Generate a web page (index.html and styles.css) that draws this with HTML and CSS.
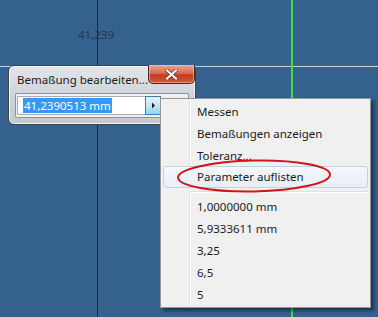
FILE: index.html
```html
<!DOCTYPE html>
<html lang="de">
<head>
  <meta charset="utf-8"/>
  <title>Bemaßung bearbeiten</title>
  <link rel="stylesheet" href="styles.css">
</head>
<body>

<div class="scene">
  <!-- Skizze : Achsen und Maß -->
  <div class="axis-v"></div>
  <div class="axis-h"></div>
  <div class="axis-green"></div>
  <span class="dim-label">41,239</span>

  <!-- Dialog -->
  <div class="dialog">
    <div class="dialog-title">
      <span>Bemaßung bearbeiten...</span>
      <button class="close-btn">
        <svg width="13" height="11" viewBox="0 0 13 11">
          <path d="M2 1.5 L11 9.5 M11 1.5 L2 9.5" stroke="#5a2a22" stroke-width="3.4" stroke-linecap="square"/>
          <path d="M2 1.5 L11 9.5 M11 1.5 L2 9.5" stroke="#ffffff" stroke-width="2.2" stroke-linecap="square"/>
        </svg>
      </button>
    </div>
    <div class="dialog-body">
      <div class="combo">
        <span class="combo-value"><span class="sel">41,2390513 mm</span></span>
        <span class="combo-btn">
          <svg width="5" height="7" viewBox="0 0 5 7"><path d="M1 0.5 L4 3.5 L1 6.5 Z" fill="#1a1a1a"/></svg>
        </span>
      </div>
    </div>
  </div>

  <!-- Kontextmenü -->
  <ul class="menu">
    <li>Messen</li>
    <li>Bemaßungen anzeigen</li>
    <li>Toleranz...</li>
    <li class="hover">Parameter auflisten</li>
    <li class="sep"></li>
    <li>1,0000000 mm</li>
    <li>5,9333611 mm</li>
    <li>3,25</li>
    <li>6,5</li>
    <li>5</li>
  </ul>

  <!-- rote Markierung -->
  <svg class="mark" width="162" height="40" viewBox="0 0 162 40">
    <ellipse cx="80" cy="19" rx="76" ry="15.5" fill="none" stroke="#d0141c" stroke-width="2" transform="rotate(-1.2 80 19)"/>
  </svg>
</div>

</body>
</html>
```

FILE: styles.css
```css
/* -------------------- Base -------------------- */
* { box-sizing: border-box; }
html, body {
  margin: 0;
  padding: 0;
  font-family: "Segoe UI", "Noto Sans", "Open Sans", sans-serif;
  font-size: 11px;
  color: #1b1b1b;
}

/* -------------------- Zeichenfläche -------------------- */
.scene {
  position: relative;
  width: 378px;
  height: 317px;
  overflow: hidden;
  background: #35618f;
}
.axis-v {
  position: absolute;
  left: 97px; top: 0;
  width: 1px; height: 317px;
  background: #1d2b3b;
}
.axis-h {
  position: absolute;
  left: 0; top: 66px;
  width: 378px; height: 1px;
  background: #c9d0d8;
}
.axis-green {
  position: absolute;
  left: 291px; top: 0;
  width: 2px; height: 317px;
  background: #3ee03a;
}
.dim-label {
  position: absolute;
  left: 78px; top: 27px;
  color: #24364a;
  font-size: 11.5px;
}

/* -------------------- Dialog -------------------- */
.dialog {
  position: absolute;
  left: 8px; top: 65px;
  width: 188px; height: 60px;
  border: 1px solid #3d434a;
  border-radius: 6px;
  background: linear-gradient(#e2e5e9, #cdd1d6 60%, #c4c9cf);
  box-shadow: inset 0 0 0 1px #f4f6f8;
  display: flex;
  flex-direction: column;
}
.dialog-title {
  display: flex;
  align-items: flex-start;
  justify-content: space-between;
  height: 27px;
  padding-left: 8px;
}
.dialog-title span {
  padding-top: 6px;
  line-height: 15px;
  white-space: nowrap;
  font-size: 11.5px;
}
.close-btn {
  flex: none;
  width: 47px; height: 19px;
  margin: -1px 4px 0 0;
  padding: 0;
  border: 1px solid #4a2620;
  border-top: none;
  border-radius: 0 0 5px 5px;
  background: linear-gradient(#e8a593, #d66d55 45%, #c23b22 55%, #cf5b3c);
  box-shadow: inset 0 0 0 1px rgba(255, 200, 180, .55);
  display: flex;
  align-items: center;
  justify-content: center;
}
.dialog-body {
  margin: 0 6px;
  padding: 2px 2px 2px 1px;
  background: #f0f0f0;
  border: 1px solid #8c939b;
  border-radius: 2px;
}
.combo {
  display: flex;
  width: 144px;
  height: 19px;
  background: #fff;
  border: 1px solid #abadb3;
  border-right: none;
}
.combo-value {
  flex: 1;
  padding: 1px 0 0 5px;
  line-height: 15px;
}
.sel {
  display: inline-block;
  background: #3399ff;
  color: #fff;
  padding: 0 1px;
  font-size: 11.5px;
}
.combo-btn {
  flex: none;
  width: 16px;
  border: 1px solid #3c7fb1;
  background: linear-gradient(#e5f4fc, #c4e5f6 50%, #98d1ef);
  display: flex;
  align-items: center;
  justify-content: center;
  margin: -1px 0 -1px 0;
}

/* -------------------- Kontextmenü -------------------- */
.menu {
  position: absolute;
  left: 160px; top: 98px;
  width: 211px;
  margin: 0;
  padding: 1px 2px 2px;
  list-style: none;
  background: linear-gradient(to right, #f0f0f0 28px, #e2e3e3 28px, #e2e3e3 29px, #fff 29px, #fff 30px, #f0f0f0 30px);
  border: 1px solid #979797;
  box-shadow: 3px 3px 3px rgba(0, 0, 0, .45);
  font-size: 11.5px;
}
.menu li {
  height: 22px;
  line-height: 22px;
  padding-left: 33px;
  border: 1px solid transparent;
  border-radius: 3px;
}
.menu li.hover {
  border-color: #bdd3ea;
  background: linear-gradient(#f4f7fb, #e8eef6);
  line-height: 20px;
}
.menu li.sep {
  height: 7px;
  margin-left: 27px;
  padding: 0;
  border: none;
  border-radius: 0;
  background: linear-gradient(transparent 3px, #e0e0e0 3px, #e0e0e0 4px, #fff 4px, #fff 5px, transparent 5px);
}

/* -------------------- Markierung -------------------- */
.mark {
  position: absolute;
  left: 174px; top: 157px;
}
```
